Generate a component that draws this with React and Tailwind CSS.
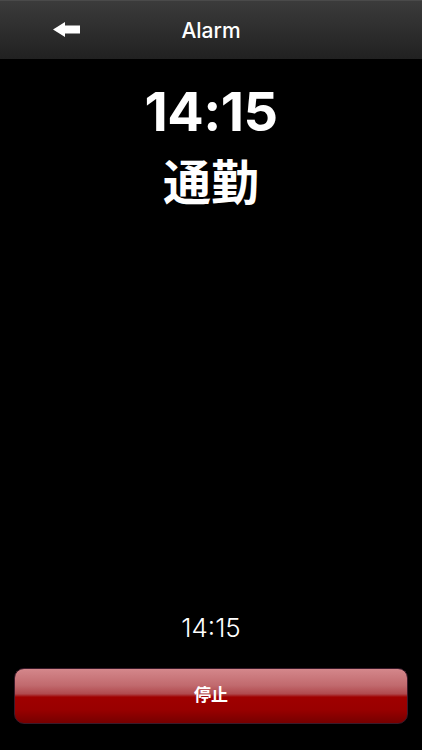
export default function App() {
  return (
    <div
      className="flex h-[750px] w-[422px] flex-col bg-black text-white"
      style={{ fontFamily: 'Inter, "Noto Sans CJK JP", sans-serif' }}
    >
      {/* header */}
      <div className="relative flex h-[59px] shrink-0 items-center justify-center border-t border-[#4a4a4a] bg-gradient-to-b from-[#3b3b3b] to-[#212121]">
        <button type="button" className="absolute left-[53px] top-[20px]">
          <svg width="28" height="17" viewBox="0 0 28 17">
            <path d="M0 8.5 L12 1 L12 4.5 L27 4.5 L27 12.5 L12 12.5 L12 16 Z" fill="#fff" />
          </svg>
        </button>
        <h1 className="text-[21px] font-medium leading-none">Alarm</h1>
      </div>

      <div className="flex flex-col items-center pt-[22px]">
        <div className="text-[54px] font-bold leading-[62px] tracking-[-0.5px]">14:15</div>
        <div className="mt-[12px] text-[48px] font-bold leading-[56px]">通勤</div>
      </div>

      <div className="flex-1" />

      <div className="pb-[25px] text-center text-[26px] font-light leading-[30px]">14:15</div>

      <div className="px-[14px] pb-[26px]">
        <button
          type="button"
          className="flex h-[56px] w-full items-center justify-center rounded-[10px] border border-[#3a1a2a] text-[17px] font-bold"
          style={{
            background:
              'linear-gradient(to bottom, #d4878b 0%, #c16a6e 30%, #b04a4e 46%, #9f0000 52%, #990000 75%, #760000 100%)',
          }}
        >
          停止
        </button>
      </div>
    </div>
  );
}
